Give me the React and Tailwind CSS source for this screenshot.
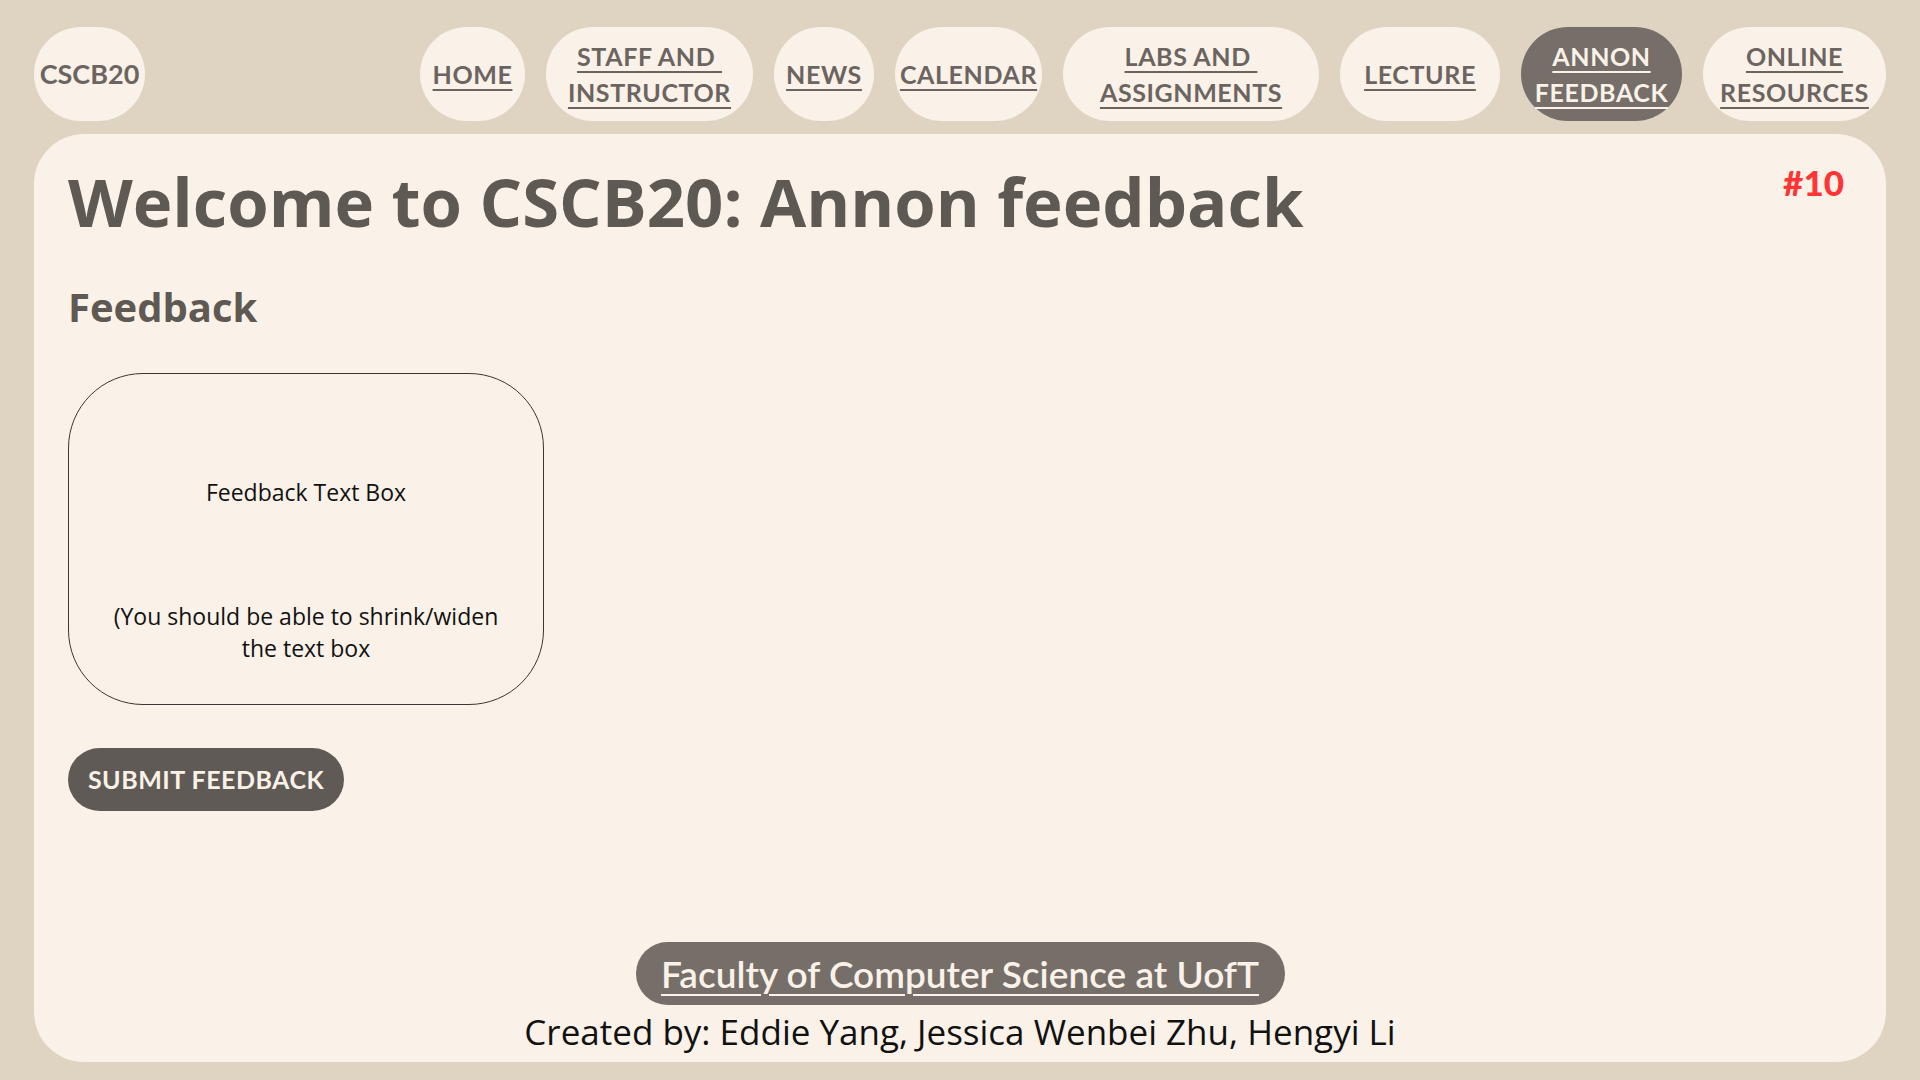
import React from 'react'

const navItems = [
  { lines: ['HOME'], w: 'w-[105px]' },
  { lines: ['STAFF AND\u00a0', 'INSTRUCTOR'], w: 'w-[207px]' },
  { lines: ['NEWS'], w: 'w-[100px]' },
  { lines: ['CALENDAR'], w: 'w-[147px]' },
  { lines: ['LABS AND\u00a0', 'ASSIGNMENTS'], w: 'w-[256px]' },
  { lines: ['LECTURE'], w: 'w-[160px]' },
  { lines: ['ANNON', 'FEEDBACK'], w: 'w-[161px]', active: true },
  { lines: ['ONLINE', 'RESOURCES'], w: 'w-[183px]' },
]

function NavPill({ item }) {
  return (
    <a
      href="#"
      className={`${item.w} h-[94px] rounded-full flex flex-col items-center justify-center text-[25px] tracking-[0.6px] leading-[36px] font-bold underline underline-offset-[5px] decoration-2 ${
        item.active ? 'bg-[#756e69] text-[#faf2e8]' : 'bg-[#faf2e8] text-[#6b6460]'
      }`}
    >
      {item.lines.map(line => (
        <span key={line} className="whitespace-pre">{line}</span>
      ))}
    </a>
  )
}

export default function App() {
  return (
    <div className="w-[1920px] h-[1080px] bg-[#dfd3c2] flex flex-col px-[34px] pt-[27px] font-['Lato',sans-serif]">
      <header className="flex items-center justify-between">
        <div className="w-[111px] h-[94px] rounded-full bg-[#faf2e8] flex items-center justify-center text-[27px] font-bold text-[#6b6460]">
          CSCB20
        </div>
        <nav className="flex items-center gap-[21px]">
          {navItems.map(item => (
            <NavPill key={item.lines.join(' ')} item={item} />
          ))}
        </nav>
      </header>

      <main className="mt-[13px] h-[928px] rounded-[50px] bg-[#faf2e8] flex flex-col px-[34px] pt-[34px] pb-[13px]">
        <div className="flex items-start justify-between">
          <h1 className="font-['Open_Sans',sans-serif] font-bold text-[67px] leading-none text-[#5f5953]">
            Welcome to CSCB20: Annon feedback
          </h1>
          <span className="mt-[-3px] mr-[8px] text-[35px] leading-none font-black text-[#ff3535]">#10</span>
        </div>

        <h2 className="mt-[52px] font-['Open_Sans',sans-serif] font-bold text-[40px] leading-none text-[#5f5953]">
          Feedback
        </h2>

        <div className="mt-[46px] w-[476px] h-[332px] border border-[#3a3633] rounded-[75px] flex flex-col items-center px-[35px] pt-[102px] font-['Open_Sans',sans-serif] text-[23px] leading-[32px] text-[#111] text-center">
          <p>Feedback Text Box</p>
          <p className="mt-[92px]">(You should be able to shrink/widen the text box</p>
        </div>

        <button className="mt-[43px] w-[276px] h-[63px] rounded-full bg-[#5f5a55] text-[#faf2e8] text-[25px] font-bold tracking-[0.5px]">
          SUBMIT FEEDBACK
        </button>

        <div className="flex-1" />

        <footer className="flex flex-col items-center">
          <a
            href="#"
            className="w-[649px] h-[63px] rounded-full bg-[#756e69] flex items-center justify-center text-[37px] font-semibold text-[#faf2e8] underline underline-offset-[6px] decoration-2"
          >
            Faculty of Computer Science at UofT
          </a>
          <p className="mt-[9px] font-['Open_Sans',sans-serif] text-[35px] leading-none text-[#111]">
            Created by: Eddie Yang, Jessica Wenbei Zhu, Hengyi Li
          </p>
        </footer>
      </main>
    </div>
  )
}
